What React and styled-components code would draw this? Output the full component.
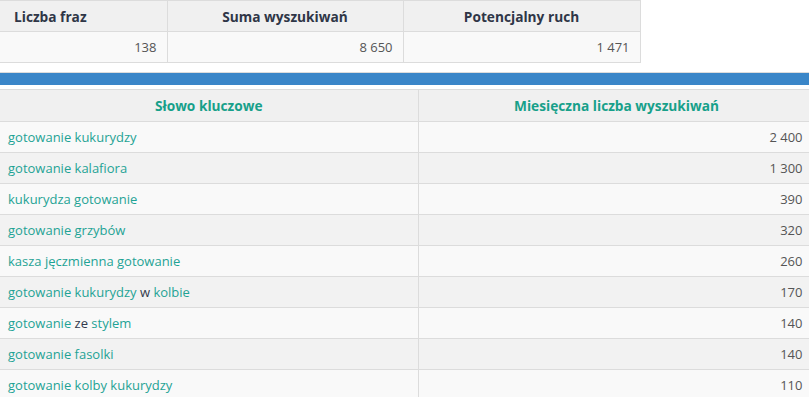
import React from "react";
import styled, { createGlobalStyle } from "styled-components";

const Global = createGlobalStyle`
  html, body { margin: 0; padding: 0; background: #fff; overflow: hidden; }
  body { font-family: "Open Sans", "Liberation Sans", sans-serif; font-size: 13px; }
`;

const Page = styled.div`
  width: 815px;
`;

const Table = styled.table`
  border-collapse: collapse;
  table-layout: fixed;
  width: ${(p) => p.$width}px;
`;

const Th = styled.th`
  background: #f0f0f0;
  border: 1px solid #dcdcdc;
  height: ${(p) => p.$h || 30}px;
  padding: 0 8px;
  padding-left: ${(p) => (p.$left ? "14px" : "8px")};
  text-align: ${(p) => (p.$left ? "left" : "center")};
  font-weight: 700;
  font-size: 13.7px;
  color: ${(p) => (p.$accent ? "#17a08a" : "#2f3647")};
  &:first-child { border-left: none; }
`;

const Td = styled.td`
  background: ${(p) => (p.$alt ? "#f2f2f2" : "#f9f9f9")};
  border: 1px solid #dcdcdc;
  height: 30px;
  padding: 0 ${(p) => p.$pr || 10}px 0 8px;
  text-align: ${(p) => (p.$right ? "right" : "left")};
  color: #555;
  font-size: 13px;
  white-space: nowrap;
  &:first-child { border-left: none; }
`;

const Link = styled.span`
  color: #1fa395;
`;

const Plain = styled.span`
  color: #333a4d;
`;

const Bar = styled.div`
  margin-top: 9px;
  border-top: 1px solid #dcdcdc;
  height: 12px;
  background: #3a86c8;
  width: 815px;
`;

const Spacer = styled.div`
  height: 4px;
`;

const rows = [
  [[["l", "gotowanie kukurydzy"]], "2 400"],
  [[["l", "gotowanie kalafiora"]], "1 300"],
  [[["l", "kukurydza gotowanie"]], "390"],
  [[["l", "gotowanie grzybów"]], "320"],
  [[["l", "kasza jęczmienna gotowanie"]], "260"],
  [[["l", "gotowanie kukurydzy"], ["p", " w "], ["l", "kolbie"]], "170"],
  [[["l", "gotowanie"], ["p", " ze "], ["l", "stylem"]], "140"],
  [[["l", "gotowanie fasolki"]], "140"],
  [[["l", "gotowanie kolby kukurydzy"]], "110"],
];

export default function App() {
  return (
    <Page>
      <Global />
      <Table $width={640}>
        <colgroup>
          <col style={{ width: 167 }} />
          <col style={{ width: 236 }} />
          <col style={{ width: 237 }} />
        </colgroup>
        <thead>
          <tr>
            <Th $left>Liczba fraz</Th>
            <Th>Suma wyszukiwań</Th>
            <Th>Potencjalny ruch</Th>
          </tr>
        </thead>
        <tbody>
          <tr>
            <Td $right>138</Td>
            <Td $right>8 650</Td>
            <Td $right>1 471</Td>
          </tr>
        </tbody>
      </Table>
      <Bar />
      <Spacer />
      <Table $width={815}>
        <colgroup>
          <col style={{ width: 418 }} />
          <col style={{ width: 397 }} />
        </colgroup>
        <thead>
          <tr>
            <Th $accent $h={31}>Słowo kluczowe</Th>
            <Th $accent $h={31}>Miesięczna liczba wyszukiwań</Th>
          </tr>
        </thead>
        <tbody>
          {rows.map(([parts, n], i) => (
            <tr key={i}>
              <Td $alt={i % 2 === 1}>
                {parts.map(([k, t], j) =>
                  k === "l" ? <Link key={j}>{t}</Link> : <Plain key={j}>{t}</Plain>
                )}
              </Td>
              <Td $alt={i % 2 === 1} $right $pr={12}>
                {n}
              </Td>
            </tr>
          ))}
        </tbody>
      </Table>
    </Page>
  );
}
